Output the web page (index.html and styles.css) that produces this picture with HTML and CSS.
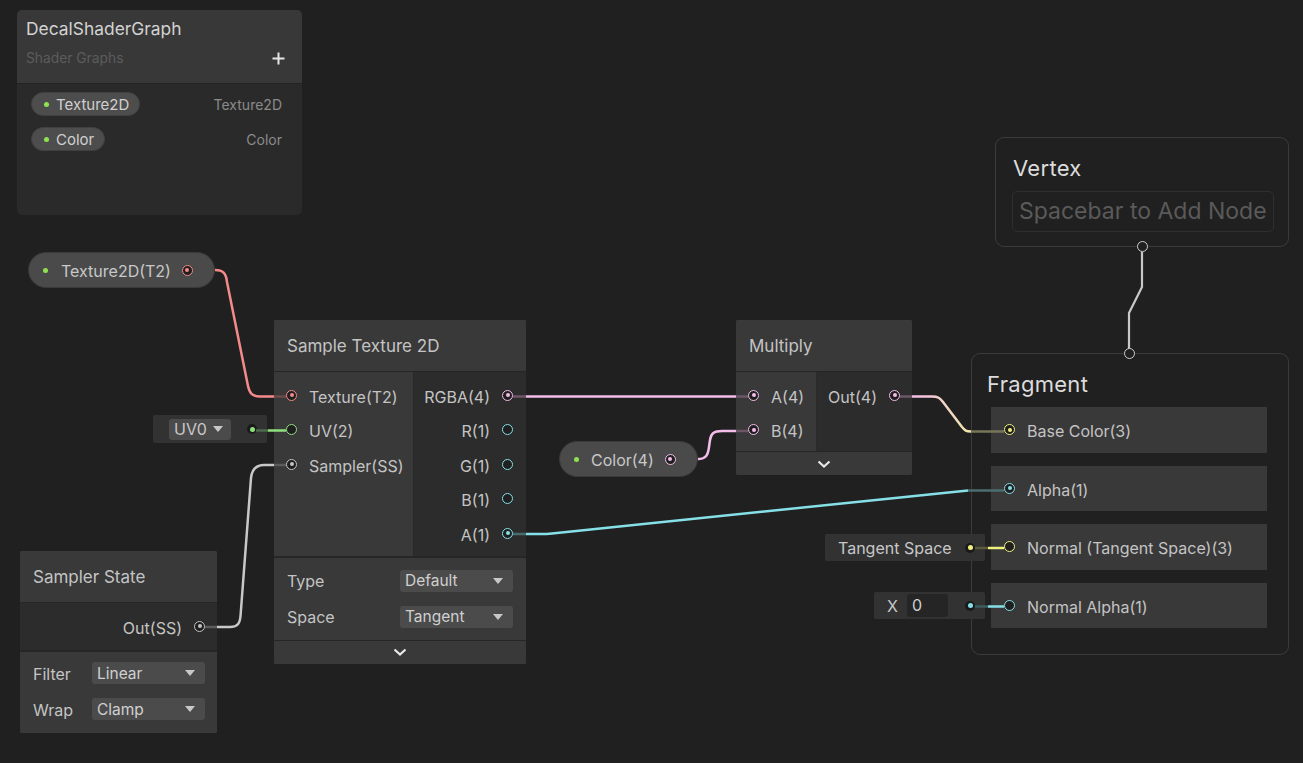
FILE: index.html
```html
<!DOCTYPE html>
<html>
<head>
<meta charset="utf-8">
<link rel="stylesheet" href="styles.css">
</head>
<body>
<div class="canvas">

  <!-- Blackboard -->
  <div class="blackboard">
    <div class="bb-head">
      <div class="bb-title">DecalShaderGraph</div>
      <div class="bb-subrow">
        <span class="bb-sub">Shader Graphs</span>
        <svg class="bb-add" width="13" height="13" viewBox="0 0 13 13"><path d="M6.5 0.5V12.5M0.5 6.5H12.5" stroke="#e6e6e6" stroke-width="2"/></svg>
      </div>
    </div>
    <div class="bb-body">
      <div class="bb-row"><span class="bb-pill"><i class="pdot"></i>Texture2D</span><span class="bb-type">Texture2D</span></div>
      <div class="bb-row"><span class="bb-pill"><i class="pdot"></i>Color</span><span class="bb-type">Color</span></div>
    </div>
  </div>

  <!-- Texture2D property node -->
  <div class="prop prop-tex">
    <i class="pdot"></i><span class="prop-label">Texture2D(T2)</span><span class="port c-red on"></span>
  </div>

  <!-- UV0 default value -->
  <div class="defval dv-uv">
    <span class="dd dd-uv"><span>UV0</span><i class="tri"></i></span>
    <span class="vdot c-green"></span>
  </div>

  <!-- Sample Texture 2D -->
  <div class="node n-sample">
    <div class="n-head">Sample Texture 2D</div>
    <div class="n-body">
      <div class="n-in in-sample">
        <div class="slot-in"><span class="port c-red on"></span><span class="lbl">Texture(T2)</span></div>
        <div class="slot-in"><span class="port c-green"></span><span class="lbl">UV(2)</span></div>
        <div class="slot-in"><span class="port c-grey on"></span><span class="lbl">Sampler(SS)</span></div>
      </div>
      <div class="n-out out-sample">
        <div class="slot-out"><span class="lbl">RGBA(4)</span><span class="port c-pink on"></span></div>
        <div class="slot-out"><span class="lbl">R(1)</span><span class="port c-cyan"></span></div>
        <div class="slot-out"><span class="lbl">G(1)</span><span class="port c-cyan"></span></div>
        <div class="slot-out"><span class="lbl">B(1)</span><span class="port c-cyan"></span></div>
        <div class="slot-out"><span class="lbl">A(1)</span><span class="port c-cyan on"></span></div>
      </div>
    </div>
    <div class="n-settings">
      <div class="set-row"><span class="lbl">Type</span><span class="dd dd-set"><span>Default</span><i class="tri"></i></span></div>
      <div class="set-row"><span class="lbl">Space</span><span class="dd dd-set"><span>Tangent</span><i class="tri"></i></span></div>
    </div>
    <div class="n-collapse"><svg width="14" height="8" viewBox="0 0 14 8"><path d="M1.5 1.5L7 6.5L12.5 1.5" fill="none" stroke="#e8e8e8" stroke-width="2.2"/></svg></div>
  </div>

  <!-- Sampler State -->
  <div class="node n-sampler">
    <div class="n-head">Sampler State</div>
    <div class="n-outonly">
      <div class="slot-out"><span class="lbl">Out(SS)</span><span class="port c-grey on"></span></div>
    </div>
    <div class="n-settings set-sampler">
      <div class="set-row"><span class="lbl">Filter</span><span class="dd dd-set"><span>Linear</span><i class="tri"></i></span></div>
      <div class="set-row"><span class="lbl">Wrap</span><span class="dd dd-set"><span>Clamp</span><i class="tri"></i></span></div>
    </div>
  </div>

  <!-- Multiply -->
  <div class="node n-mul">
    <div class="n-head">Multiply</div>
    <div class="n-body">
      <div class="n-in in-mul">
        <div class="slot-in"><span class="port c-pink on"></span><span class="lbl">A(4)</span></div>
        <div class="slot-in"><span class="port c-pink on"></span><span class="lbl">B(4)</span></div>
      </div>
      <div class="n-out">
        <div class="slot-out"><span class="lbl">Out(4)</span><span class="port c-pink on"></span></div>
      </div>
    </div>
    <div class="n-collapse col-mul"><svg width="14" height="8" viewBox="0 0 14 8"><path d="M1.5 1.5L7 6.5L12.5 1.5" fill="none" stroke="#e8e8e8" stroke-width="2.2"/></svg></div>
  </div>

  <!-- Color property node -->
  <div class="prop prop-color">
    <i class="pdot"></i><span class="prop-label">Color(4)</span><span class="port c-pink on"></span>
  </div>

  <!-- Vertex context -->
  <div class="ctx ctx-vertex">
    <div class="ctx-title">Vertex</div>
    <div class="ctx-empty">Spacebar to Add Node</div>
    <span class="ctx-port ctx-port-bottom"></span>
  </div>

  <!-- Fragment context -->
  <div class="ctx ctx-frag">
    <span class="ctx-port ctx-port-top"></span>
    <div class="ctx-title">Fragment</div>
    <div class="blocks">
      <div class="block"><span class="port c-yellow on"></span><span class="lbl">Base Color(3)</span></div>
      <div class="block"><span class="port c-cyan on"></span><span class="lbl">Alpha(1)</span></div>
      <div class="block"><span class="port c-yellow"></span><span class="lbl">Normal (Tangent Space)(3)</span></div>
      <div class="block"><span class="port c-cyan"></span><span class="lbl">Normal Alpha(1)</span></div>
    </div>
  </div>

  <!-- Default values for fragment -->
  <div class="defval dv-tan">
    <span class="dv-text">Tangent Space</span>
    <span class="vdot c-yellow"></span>
  </div>
  <div class="defval dv-x">
    <span class="dv-x-lbl">X</span>
    <span class="num">0</span>
    <span class="vdot c-cyan"></span>
  </div>

  <!-- Edges -->
  <svg class="edges" width="1303" height="763" viewBox="0 0 1303 763">
    <defs>
      <linearGradient id="gOut" x1="912" y1="0" x2="972" y2="0" gradientUnits="userSpaceOnUse">
        <stop offset="0" stop-color="#f4bde9"/>
        <stop offset="1" stop-color="#f1e6a8"/>
      </linearGradient>
    </defs>
    <g fill="none" stroke-width="2.5" stroke-linecap="butt">
      <!-- texture -->
      <path d="M215 270 C223 270 226 273 227 282 L248 386 C249.5 393 252 396.5 260 396.5 L274 396.5" stroke="#f58a8a"/>
      <path d="M274 396.5 L286 396.5" stroke="#6e4a4a"/>
      <!-- uv -->
      <path d="M256 430.5 L268 430.5" stroke="#4f6a4a"/>
      <path d="M268 430.5 L286 430.5" stroke="#8fe07e"/>
      <!-- sampler -->
      <path d="M205 627 L217 627" stroke="#5c5c5c"/>
      <path d="M217 627 L230 627 C238 627 240 623 240.6 615 L251 478 C252 469 256 465 264 465 L274 465" stroke="#c8c8c8"/>
      <path d="M274 465 L286 465" stroke="#5c5c5c"/>
      <!-- RGBA -> A -->
      <path d="M513 396.5 L526 396.5" stroke="#6e5669"/>
      <path d="M526 396.5 L736 396.5" stroke="#f4bde9"/>
      <path d="M736 396.5 L748 396.5" stroke="#6e5669"/>
      <!-- Color -> B -->
      <path d="M698 459 C706 459 708 455 709 447 L710 440 C711 433.5 714 431 722 431 L736 431" stroke="#f4bde9"/>
      <path d="M736 431 L748 431" stroke="#6e5669"/>
      <!-- Out -> Base Color -->
      <path d="M900 396.5 L912 396.5" stroke="#6e5669"/>
      <path d="M912 396.5 L932 396.5 C938 396.5 940 398 943 402 L962 427 C965 430.5 966 431.5 971 431.5" stroke="url(#gOut)"/>
      <path d="M971 431.5 L1004 431.5" stroke="#77765a"/>
      <!-- A -> Alpha -->
      <path d="M513 534 L526 534" stroke="#4a6b6e"/>
      <path d="M526 534 L542 534 C546 534 548 533.8 552 533.4 L968 490.5" stroke="#86e0e8"/>
      <path d="M968 490.5 L1004 490.5" stroke="#4b6e71"/>
      <!-- tangent -->
      <path d="M975 548 L988 548" stroke="#5a5a3c"/>
      <path d="M988 548 L1004 548" stroke="#f1f27e"/>
      <!-- X -->
      <path d="M975 606.5 L988 606.5" stroke="#3e5c5e"/>
      <path d="M988 606.5 L1004 606.5" stroke="#86e0e8"/>
      <!-- vertex -> fragment -->
      <path d="M1142 252 L1142 287 L1129 313 L1129 349" stroke="#c8c8c8" stroke-width="2.2"/>
    </g>
  </svg>
</div>
</body>
</html>
```

FILE: styles.css
```css
* { box-sizing: border-box; }

body {
  margin: 0;
  background: #202020;
  font-family: Inter, "Noto Sans", "Liberation Sans", sans-serif;
}

.canvas {
  position: relative;
  width: 1303px;
  height: 763px;
  overflow: hidden;
  background: #202020;
  color: #c4c4c4;
}

/* ---------- Blackboard ---------- */
.blackboard {
  position: absolute;
  left: 17px;
  top: 10px;
  width: 285px;
  height: 205px;
  background: #2a2a2a;
  border-radius: 5px;
  overflow: hidden;
  z-index: 1;
}
.bb-head {
  height: 74px;
  background: #383838;
  border-bottom: 1px solid #232323;
  padding: 8px 20px 0 9px;
}
.bb-title {
  font-size: 17.4px;
  line-height: 22px;
  color: #d2d2d2;
}
.bb-subrow {
  display: flex;
  justify-content: space-between;
  align-items: center;
  margin-top: 8px;
  height: 20px;
}
.bb-sub {
  font-size: 13.8px;
  color: #5c5c5c;
}
.bb-add { margin-right: -3px; }
.bb-body {
  padding: 8px 20px 0 14px;
  display: flex;
  flex-direction: column;
  gap: 11px;
}
.bb-row {
  display: flex;
  align-items: center;
  justify-content: space-between;
  height: 24px;
}
.bb-pill {
  display: flex;
  align-items: center;
  height: 24px;
  padding: 0 10px 0 12px;
  background: #4d4d4d;
  border: 1px solid #404040;
  border-radius: 12px;
  font-size: 15px;
  color: #d0d0d0;
  gap: 7px;
}
.bb-type {
  font-size: 14px;
  color: #8a8a8a;
}
.pdot {
  display: block;
  width: 5px;
  height: 5px;
  border-radius: 50%;
  background: #8ee24f;
  flex: none;
}

/* ---------- Property nodes ---------- */
.prop {
  position: absolute;
  height: 36px;
  display: flex;
  align-items: center;
  background: #4a4a4a;
  border: 1px solid #3a3a3a;
  border-radius: 18px;
  padding-left: 14px;
  z-index: 1;
}
.prop-label {
  font-size: 16px;
  color: #c8c8c8;
  margin-left: 13px;
  padding-top: 2px;
}
.prop .port { margin-left: 12px; }
.prop-tex { left: 28px; top: 252px; width: 187px; }
.prop-tex .port { margin-left: 11px; }
.prop-color { left: 559px; top: 441px; width: 139px; }
.prop-color .prop-label { margin-left: 12px; }
.prop-color .port { margin-left: 11px; }

/* ---------- Ports ---------- */
.port {
  position: relative;
  display: block;
  flex: none;
  width: 11px;
  height: 11px;
  border-radius: 50%;
  border: 1.5px solid #ccc;
  background: #1f1f1f;
}
.port.on::after {
  content: "";
  position: absolute;
  left: 50%;
  top: 50%;
  width: 4px;
  height: 4px;
  margin: -2px 0 0 -2px;
  border-radius: 50%;
  background: currentColor;
}
.c-red { border-color: #f58a8a; color: #f58a8a; }
.c-green { border-color: #8fe07e; color: #8fe07e; }
.c-grey { border-color: #c4c4c4; color: #c4c4c4; }
.c-pink { border-color: #f4bde9; color: #f4bde9; }
.c-cyan { border-color: #86e0e8; color: #86e0e8; }
.c-yellow { border-color: #f1f27e; color: #f1f27e; }

.vdot {
  position: relative;
  display: block;
  flex: none;
  width: 10px;
  height: 10px;
  border-radius: 50%;
  background: #1a1a1a;
}
.vdot::after {
  content: "";
  position: absolute;
  left: 2.5px;
  top: 2.5px;
  width: 5px;
  height: 5px;
  border-radius: 50%;
  background: currentColor;
}

/* ---------- Generic node ---------- */
.node {
  position: absolute;
  background: #393939;
  border-radius: 2px;
  overflow: hidden;
  z-index: 1;
}
.n-head {
  height: 52px;
  display: flex;
  align-items: center;
  padding-left: 13px;
  padding-top: 1px;
  font-size: 17px;
  color: #c4c4c4;
  background: #393939;
  border-bottom: 1px solid #262626;
}
.n-body { display: flex; }
.n-in {
  background: #393939;
  border-right: 1px solid #2a2a2a;
  padding: 6px 0 5px 12px;
}
.n-out {
  flex: 1;
  background: #2c2c2c;
  padding-top: 6px;
  padding-right: 13px;
}
.out-sample { padding-bottom: 5px; }
.lbl {
  font-size: 16px;
  color: #c4c4c4;
  padding-top: 3px;
  white-space: nowrap;
}
.slot-in {
  height: 34.5px;
  display: flex;
  align-items: center;
  gap: 12px;
}
.slot-out {
  height: 34.5px;
  display: flex;
  align-items: center;
  justify-content: flex-end;
  gap: 12px;
}
.n-settings {
  border-top: 2px solid #262626;
  padding: 5px 13px;
  background: #393939;
}
.set-row {
  height: 36px;
  display: flex;
  align-items: center;
  justify-content: space-between;
}
.set-row .lbl { padding-top: 1px; }
.dd {
  display: flex;
  align-items: center;
  justify-content: space-between;
  background: #4b4b4b;
  border-radius: 3px;
  font-size: 15.5px;
  color: #d0d0d0;
}
.dd-set {
  width: 113px;
  height: 22px;
  padding: 0 10px 0 5px;
}
.tri {
  display: block;
  width: 0;
  height: 0;
  border-left: 5.5px solid transparent;
  border-right: 5.5px solid transparent;
  border-top: 6px solid #c8c8c8;
}
.n-collapse {
  height: 24px;
  border-top: 1px solid #262626;
  background: #393939;
  display: flex;
  align-items: center;
  justify-content: center;
}

/* Sample texture */
.n-sample { left: 274px; top: 320px; width: 252px; }
.in-sample { width: 140px; }
.n-sample .n-settings { height: 84px; }

/* Sampler state */
.n-sampler { left: 20px; top: 551px; width: 197px; }
.n-outonly {
  height: 47px;
  background: #2c2c2c;
  padding: 6px 12px 0 0;
}
.set-sampler { padding: 3px 12px 4px 13px; height: 83px; }

/* Multiply */
.n-mul { left: 736px; top: 320px; width: 176px; }
.in-mul { width: 81px; padding-bottom: 4px; }
.n-mul .n-out { padding-right: 12px; }

/* ---------- Default value nodes ---------- */
.defval {
  position: absolute;
  display: flex;
  align-items: center;
  background: #323232;
  border-radius: 2px;
  z-index: 1;
}
.dv-uv { left: 153px; top: 415px; width: 114px; height: 28px; padding-left: 16px; }
.dd-uv {
  width: 62px;
  height: 21px;
  padding: 0 8px 0 5px;
  font-size: 16px;
  color: #c8c8c8;
}
.dv-uv .vdot { margin-left: 16px; }
.dv-tan {
  left: 825px; top: 534px; width: 160px; height: 27px;
  padding: 0 10px 0 13px;
  justify-content: space-between;
}
.dv-text { font-size: 16px; color: #c8c8c8; padding-top: 1px; }
.dv-x {
  left: 874px; top: 592px; width: 111px; height: 27px;
  padding: 0 10px 0 13px;
}
.dv-x-lbl { font-size: 16px; color: #c8c8c8; width: 20px; }
.num {
  width: 41px;
  height: 23px;
  background: #252525;
  border-radius: 3px;
  padding-left: 5px;
  font-size: 16px;
  line-height: 23px;
  color: #cfcfcf;
}
.dv-x .vdot { margin-left: auto; }

/* ---------- Contexts ---------- */
.ctx {
  position: absolute;
  border: 1px solid #3b3b3b;
  border-radius: 9px;
  background: #202020;
}
.ctx-title {
  font-size: 22px;
  letter-spacing: 0.3px;
  line-height: 28px;
  color: #dcdcdc;
}
.ctx-vertex {
  left: 995px; top: 137px; width: 294px; height: 110px;
  padding: 16px 0 0 16px;
}
.ctx-vertex .ctx-title { padding-left: 1px; }
.ctx-empty {
  margin-top: 9px;
  width: 262px;
  height: 41px;
  border: 1px solid #2f2f2f;
  border-radius: 5px;
  font-size: 23px;
  line-height: 39px;
  padding-left: 6px;
  color: #5a5a5a;
  white-space: nowrap;
  overflow: hidden;
}
.ctx-frag {
  left: 971px; top: 353px; width: 318px; height: 302px;
  padding: 16px 0 0 15px;
}
.blocks {
  margin-top: 9px;
  margin-left: 4px;
  display: flex;
  flex-direction: column;
  gap: 13px;
}
.block {
  width: 276px;
  height: 45.5px;
  background: #393939;
  display: flex;
  align-items: center;
  padding-left: 13px;
  gap: 12px;
}
.ctx-port {
  position: absolute;
  left: 50%;
  width: 11px;
  height: 11px;
  margin-left: -5.5px;
  border-radius: 50%;
  border: 1.5px solid #cfcfcf;
  background: #202020;
  z-index: 4;
}
.ctx-port-bottom { bottom: -6px; }
.ctx-port-top { top: -6px; margin-left: -6.5px; }

/* ---------- Edges ---------- */
.edges {
  position: absolute;
  left: 0;
  top: 0;
  z-index: 3;
  pointer-events: none;
}
```
